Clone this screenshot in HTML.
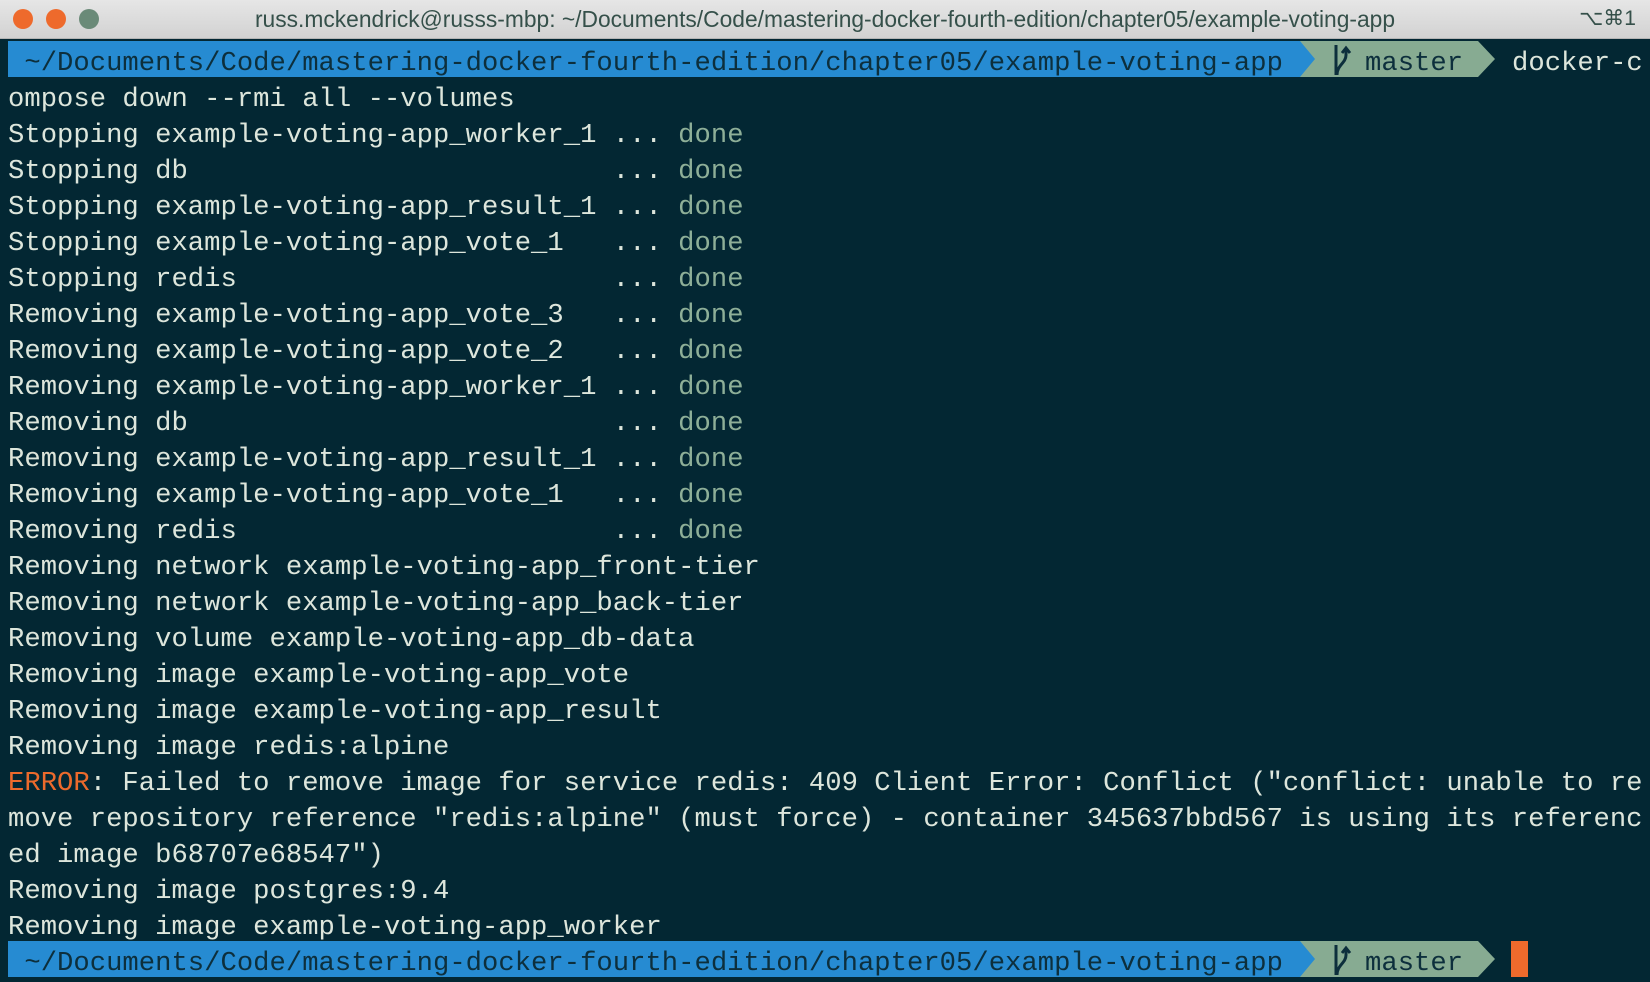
<!DOCTYPE html>
<html><head><meta charset="utf-8"><style>
html,body{margin:0;padding:0;width:1650px;height:979px;overflow:hidden;background:#032733;}
#tb{position:absolute;left:0;top:0;width:1650px;height:38px;background:linear-gradient(#e6e6e6,#d2d2d2);border-bottom:1px solid #b5b5b5;}
.dot{position:absolute;top:9px;width:20px;height:20px;border-radius:50%;}
#title{position:absolute;left:0;width:1650px;top:6px;text-align:center;font:22.8px "Liberation Sans",sans-serif;color:#35504a;}
#sc{position:absolute;right:14px;top:6px;font:21px "Liberation Sans","DejaVu Sans",sans-serif;color:#35504a;}
.r{position:absolute;left:8px;height:36px;line-height:36px;font-family:"Liberation Mono",monospace;font-size:27.2px;letter-spacing:0.03px;white-space:pre;color:#dde6dc;transform:translateY(5px);}
.d{color:#8eaf98;}
.e{color:#ec6a2c;}
.pb{position:absolute;height:36px;}
</style></head><body>
<div id="tb">
<div class="dot" style="left:13px;background:#ee6a2c"></div>
<div class="dot" style="left:46px;background:#ee6a2c"></div>
<div class="dot" style="left:79px;background:#6a8a78"></div>
<div id="title">russ.mckendrick@russs-mbp: ~/Documents/Code/mastering-docker-fourth-edition/chapter05/example-voting-app</div>
<div id="sc">⌥⌘1</div>
</div>

<!-- prompt 1 -->
<div class="pb" style="left:8px;top:41px;width:1292px;background:#268bd2"></div>
<svg style="position:absolute;left:1300px;top:41px" width="200" height="36"><polygon points="0,0 178,0 195,18 178,36 0,36" fill="#87ab92"/><polygon points="0,0 15,18 0,36" fill="#268bd2"/><path d="M36 4 V34 M37 34 C37 24 46 22 46 14 V8 M42 12 L46 7 L50 12" stroke="#0d2f3c" stroke-width="3" fill="none"/></svg>
<div class="r" style="top:41px;color:#0d2f3c"> ~/Documents/Code/mastering-docker-fourth-edition/chapter05/example-voting-app</div>
<div class="r" style="top:41px;left:1365px;color:#0d2f3c">master</div>
<div class="r" style="top:41px;left:1512px">docker-c</div>

<div class="r" style="top:77px">ompose down --rmi all --volumes</div>
<div class="r" style="top:113px">Stopping example-voting-app_worker_1 ... <span class="d">done</span></div>
<div class="r" style="top:149px">Stopping db                          ... <span class="d">done</span></div>
<div class="r" style="top:185px">Stopping example-voting-app_result_1 ... <span class="d">done</span></div>
<div class="r" style="top:221px">Stopping example-voting-app_vote_1   ... <span class="d">done</span></div>
<div class="r" style="top:257px">Stopping redis                       ... <span class="d">done</span></div>
<div class="r" style="top:293px">Removing example-voting-app_vote_3   ... <span class="d">done</span></div>
<div class="r" style="top:329px">Removing example-voting-app_vote_2   ... <span class="d">done</span></div>
<div class="r" style="top:365px">Removing example-voting-app_worker_1 ... <span class="d">done</span></div>
<div class="r" style="top:401px">Removing db                          ... <span class="d">done</span></div>
<div class="r" style="top:437px">Removing example-voting-app_result_1 ... <span class="d">done</span></div>
<div class="r" style="top:473px">Removing example-voting-app_vote_1   ... <span class="d">done</span></div>
<div class="r" style="top:509px">Removing redis                       ... <span class="d">done</span></div>
<div class="r" style="top:545px">Removing network example-voting-app_front-tier</div>
<div class="r" style="top:581px">Removing network example-voting-app_back-tier</div>
<div class="r" style="top:617px">Removing volume example-voting-app_db-data</div>
<div class="r" style="top:653px">Removing image example-voting-app_vote</div>
<div class="r" style="top:689px">Removing image example-voting-app_result</div>
<div class="r" style="top:725px">Removing image redis:alpine</div>
<div class="r" style="top:761px"><span class="e">ERROR</span>: Failed to remove image for service redis: 409 Client Error: Conflict ("conflict: unable to re</div>
<div class="r" style="top:797px">move repository reference "redis:alpine" (must force) - container 345637bbd567 is using its referenc</div>
<div class="r" style="top:833px">ed image b68707e68547")</div>
<div class="r" style="top:869px">Removing image postgres:9.4</div>
<div class="r" style="top:905px">Removing image example-voting-app_worker</div>

<!-- prompt 2 -->
<div class="pb" style="left:8px;top:941px;width:1292px;background:#268bd2"></div>
<svg style="position:absolute;left:1300px;top:941px" width="200" height="36"><polygon points="0,0 178,0 195,18 178,36 0,36" fill="#87ab92"/><polygon points="0,0 15,18 0,36" fill="#268bd2"/><path d="M36 4 V34 M37 34 C37 24 46 22 46 14 V8 M42 12 L46 7 L50 12" stroke="#0d2f3c" stroke-width="3" fill="none"/></svg>
<div class="r" style="top:941px;color:#0d2f3c"> ~/Documents/Code/mastering-docker-fourth-edition/chapter05/example-voting-app</div>
<div class="r" style="top:941px;left:1365px;color:#0d2f3c">master</div>
<div class="pb" style="left:1511px;top:941px;width:17px;background:#ee6a2c"></div>
</body></html>
